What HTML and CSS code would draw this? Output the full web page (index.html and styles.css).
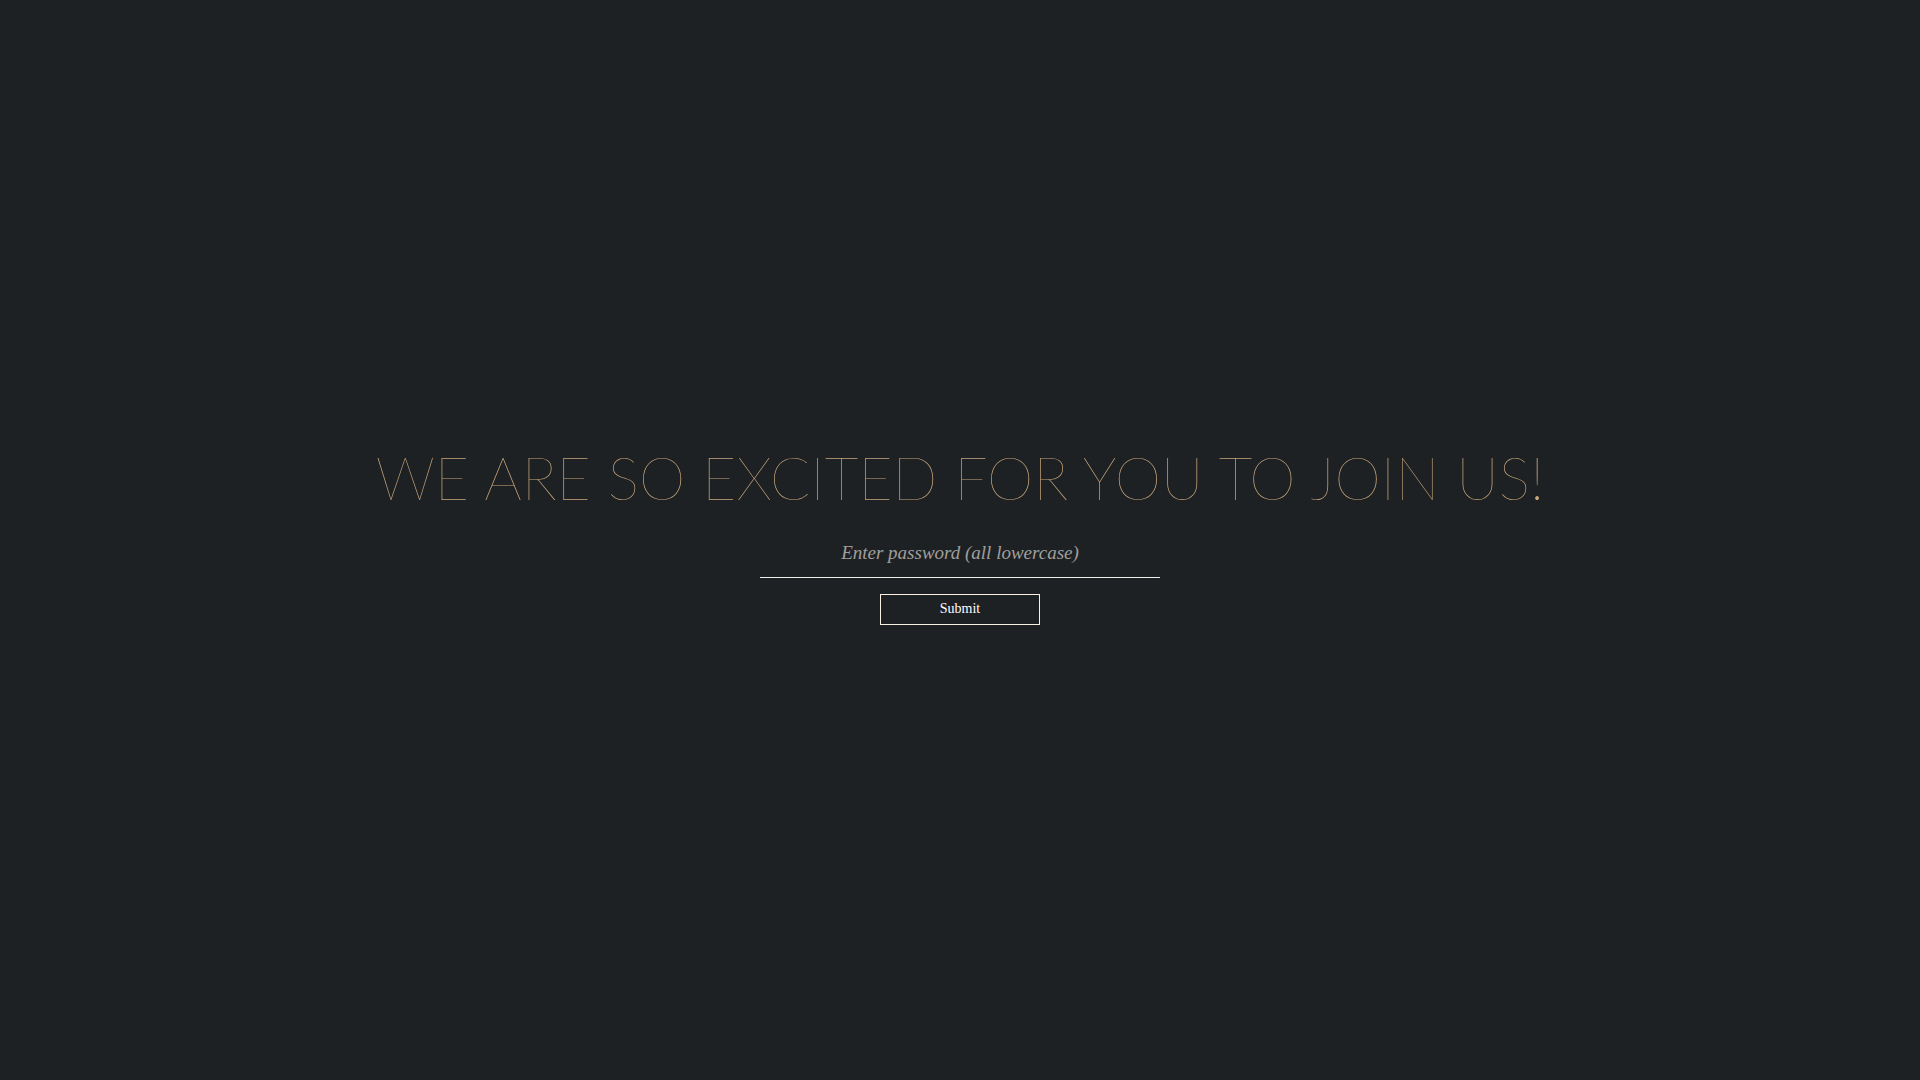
FILE: index.html
```html
<!DOCTYPE html>
<html lang="en">
<head>
  <meta charset="UTF-8">
  <meta name="viewport" content="width=device-width, initial-scale=1.0">
  <title>Welcome</title>
  <link rel="stylesheet" href="styles.css">
</head>
<body>
  <main class="container">
    <h1>We are so excited for you to join us!</h1>
    <form class="password-form">
      <input type="password" class="password-input" placeholder="Enter password (all lowercase)" aria-label="Password">
      <button type="submit" class="btn">Submit</button>
    </form>
  </main>
</body>
</html>
```
FILE: styles.css
```css
:root {
  --background-color: #1e2124;
  --title-color: #c8a67c;
  --text-color: #ffffff;
  --line-color: #eeeeea;
  --border-color: #faf1e4;
  --placeholder-color: #a09f9b;
}

* {
  margin: 0;
  padding: 0;
  box-sizing: border-box;
}

body {
  font-family: "Liberation Serif", "Times New Roman", serif;
  background-color: var(--background-color);
  color: var(--text-color);
}

.container {
  min-height: 100vh;
  padding-bottom: 14px;
  display: flex;
  flex-direction: column;
  align-items: center;
  justify-content: center;
}

h1 {
  font-family: Lato, sans-serif;
  font-size: 59px;
  font-weight: 100;
  line-height: 72px;
  text-align: center;
  text-transform: uppercase;
  color: var(--title-color);
  margin-bottom: 16px;
}

.password-form {
  width: 400px;
  max-width: 90%;
  display: flex;
  flex-direction: column;
  align-items: center;
  gap: 16px;
}

.password-input {
  width: 100%;
  height: 48px;
  font-family: inherit;
  font-size: 19px;
  text-align: center;
  color: var(--text-color);
  background: transparent;
  border: none;
  border-bottom: 1px solid var(--line-color);
  outline: none;
}

.password-input::placeholder {
  font-style: italic;
  color: var(--placeholder-color);
  opacity: 1;
}

.btn {
  width: 160px;
  height: 31px;
  font-family: inherit;
  font-size: 14px;
  color: var(--text-color);
  background: transparent;
  border: 1px solid var(--border-color);
  cursor: pointer;
}
```
